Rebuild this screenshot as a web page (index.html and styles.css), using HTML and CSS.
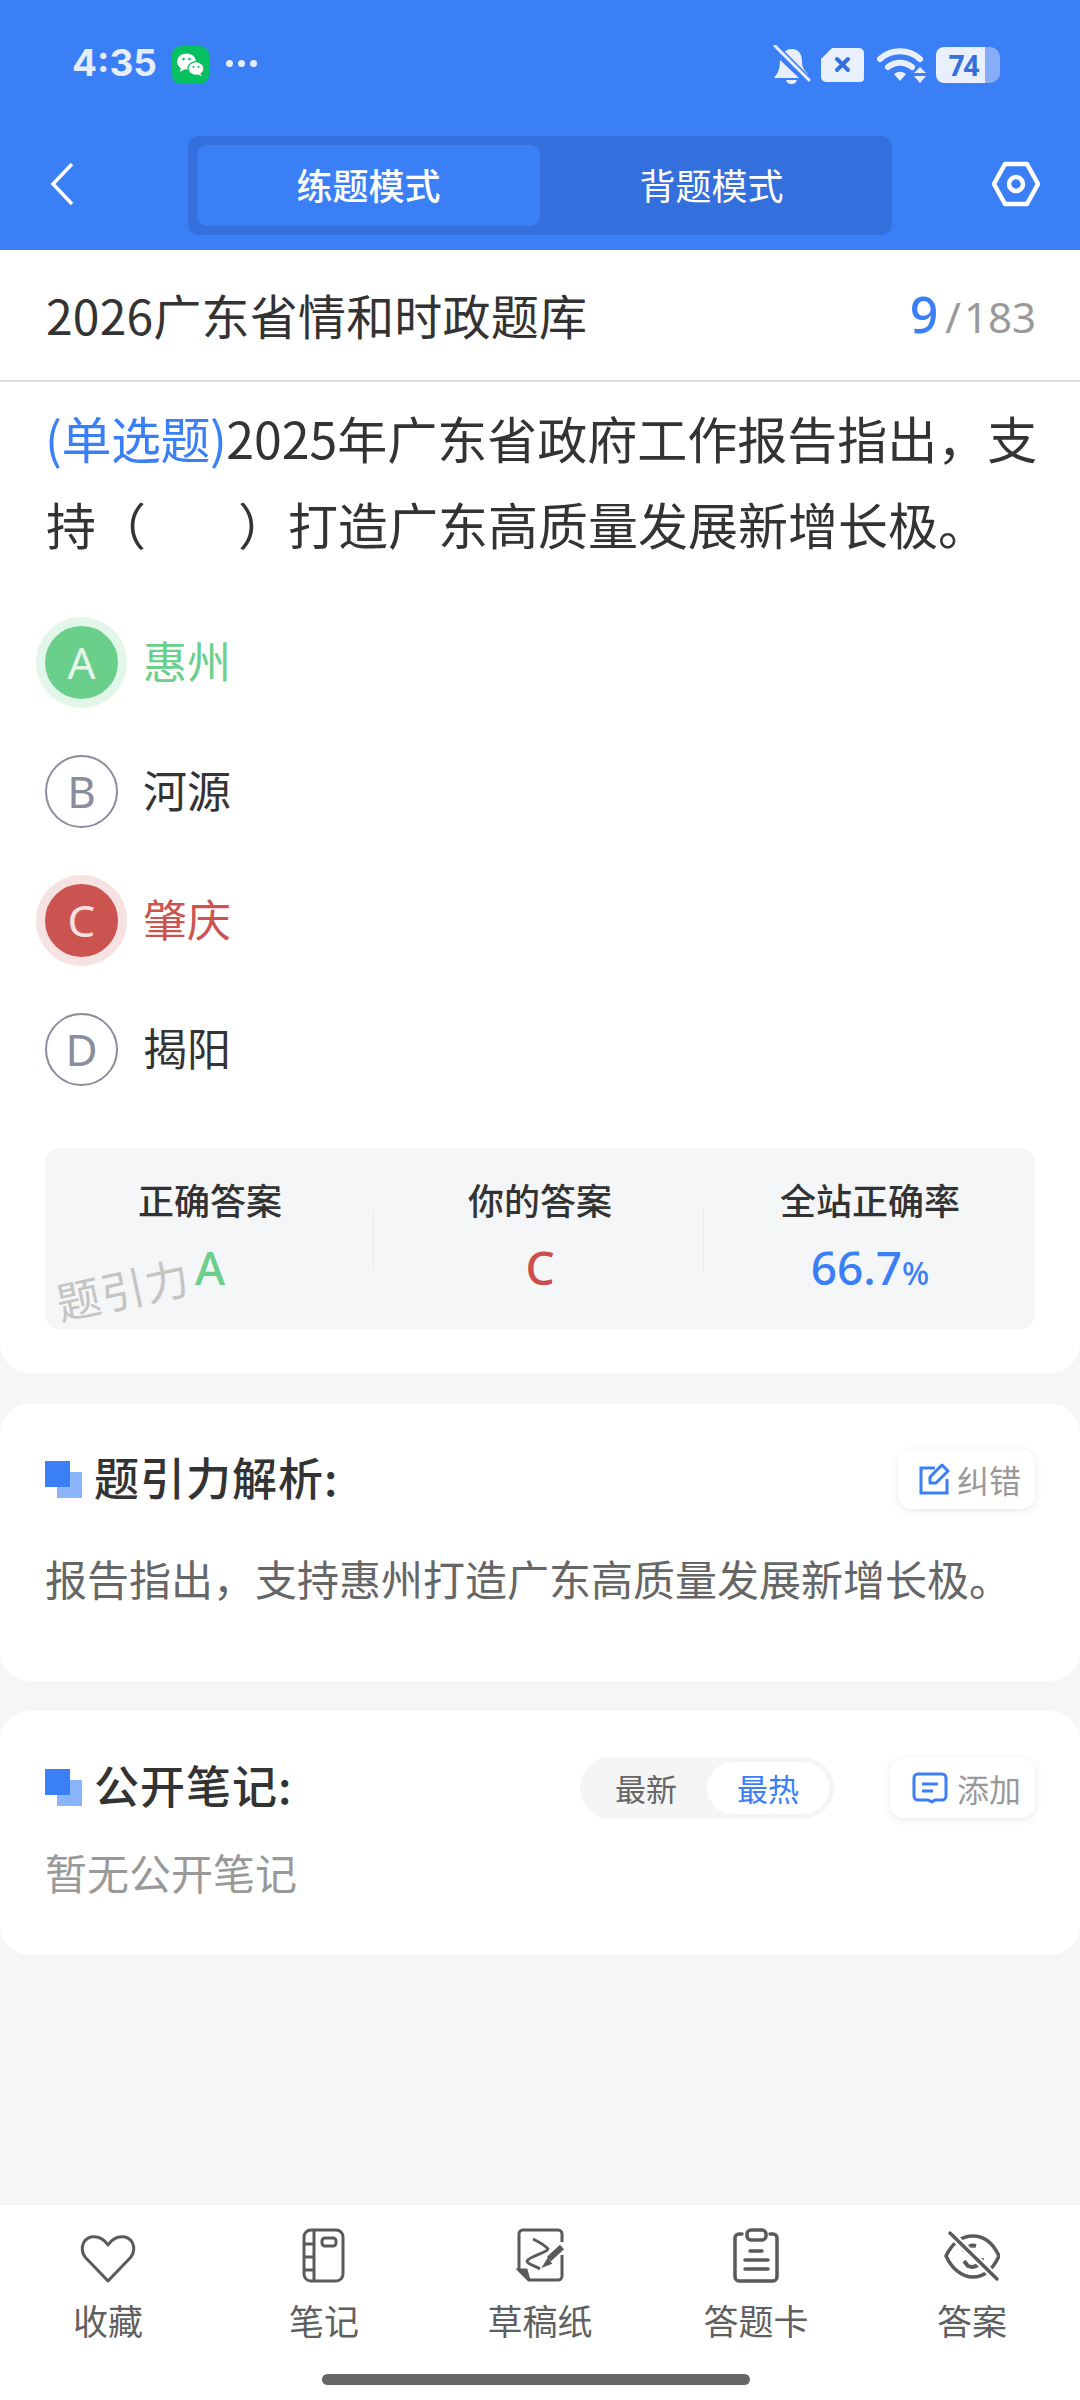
FILE: index.html
```html
<!DOCTYPE html>
<html lang="zh">
<head>
    <meta charset="UTF-8">
    <meta name="viewport" content="width=device-width, initial-scale=1.0">
    <title>题引力</title>
    <link rel="stylesheet" href="styles.css">
</head>
<body>

<div class="page">
    <!-- Blue header -->
    <header class="header">
        <div class="status-bar">
            <div class="status-left">
                <span class="time">4:35</span>
                <svg class="wechat" width="37" height="38" viewBox="0 0 37 38">
                    <rect width="37" height="38" rx="9" fill="#07c160"/>
                    <ellipse cx="14.5" cy="15.5" rx="9.5" ry="8" fill="#fff"/>
                    <path d="M9 21l-1 5 5-3z" fill="#fff"/>
                    <ellipse cx="24" cy="22.5" rx="8" ry="6.8" fill="#fff" stroke="#07c160" stroke-width="1.2"/>
                    <path d="M28 27l2 3-5-2z" fill="#fff"/>
                    <circle cx="11.5" cy="13" r="1.3" fill="#07c160"/>
                    <circle cx="17.5" cy="13" r="1.3" fill="#07c160"/>
                    <circle cx="21.5" cy="21" r="1.1" fill="#07c160"/>
                    <circle cx="26.5" cy="21" r="1.1" fill="#07c160"/>
                </svg>
                <span class="dots"><i></i><i></i><i></i></span>
            </div>
            <div class="status-right">
                <svg width="38" height="40" viewBox="0 0 38 40" fill="#e9effd">
                    <path d="M10 9a10 10 0 0 1 9-5c7 0 10 6 10 12 0 6 2 9 5 12l2 4zM7 15l19 18H1c2-3 6-6 6-18zM13 35h11c-1 3-3 4-5.500 4s-4.500-1-5.500-4z"/>
                    <path d="M2 1l34 34" stroke="#3b7ff7" stroke-width="6"/>
                    <path d="M2 1l34 34" stroke="#e9effd" stroke-width="3" stroke-linecap="round"/>
                </svg>
                <svg width="43" height="36" viewBox="0 0 43 36">
                    <path d="M11 1h27a5 5 0 0 1 5 5v25a4 4 0 0 1-4 4H5a5 5 0 0 1-5-5V12z" fill="#e9effd"/>
                    <path d="M16 12l11 11M27 12L16 23" stroke="#3470dd" stroke-width="4" stroke-linecap="round"/>
                </svg>
                <svg class="wifi" width="50" height="38" viewBox="0 0 50 38">
                    <path d="M3 13a30 30 0 0 1 40 0M11 21a19 19 0 0 1 24 0" fill="none" stroke="#e9effd" stroke-width="6" stroke-linecap="round"/>
                    <path d="M17 28a10 10 0 0 1 12 0l-6 7z" fill="#e9effd"/>
                    <path d="M43 21l6 6H37zM43 37l6-7H37z" fill="#e9effd"/>
                </svg>
                <div class="battery">
                    <span class="battery-level">74</span>
                    <span class="battery-rest"></span>
                </div>
            </div>
        </div>
        <div class="nav-bar">
            <svg class="back" width="24" height="44" viewBox="0 0 24 44">
                <path d="M22 2L3 22l19 20" fill="none" stroke="#fff" stroke-width="3.500"/>
            </svg>
            <div class="mode-tabs">
                <div class="mode-tab active">练题模式</div>
                <div class="mode-tab">背题模式</div>
            </div>
            <svg class="settings" width="50" height="46" viewBox="0 0 50 46">
                <path d="M14 3h22l11 20-11 20H14L3 23z" fill="none" stroke="#fff" stroke-width="4.500" stroke-linejoin="round"/>
                <circle cx="25" cy="23" r="7" fill="none" stroke="#fff" stroke-width="4.500"/>
            </svg>
        </div>
    </header>

    <!-- Question card -->
    <section class="question-card">
        <div class="title-row">
            <span class="bank-title">2026广东省情和时政题库</span>
            <span class="counter"><b>9</b><em>/</em>183</span>
        </div>
        <p class="question"><span class="q-type">(单选题)</span>2025年广东省政府工作报告指出，支持（<span class="blank"></span>）打造广东高质量发展新增长极。</p>

        <div class="options">
            <div class="option correct"><span class="letter">A</span>惠州</div>
            <div class="option"><span class="letter">B</span>河源</div>
            <div class="option wrong"><span class="letter">C</span>肇庆</div>
            <div class="option"><span class="letter">D</span>揭阳</div>
        </div>

        <div class="result-box">
            <div class="result-col">
                <h3>正确答案</h3>
                <span class="result-value green">A</span>
            </div>
            <div class="result-col">
                <h3>你的答案</h3>
                <span class="result-value red">C</span>
            </div>
            <div class="result-col">
                <h3>全站正确率</h3>
                <span class="result-value blue">66.7<small>%</small></span>
            </div>
            <span class="watermark">题引力</span>
        </div>
    </section>

    <!-- Analysis -->
    <section class="card analysis">
        <div class="card-head">
            <h2 class="card-title"><span class="squares"></span>题引力解析:</h2>
            <div class="small-btn">
                <svg width="32" height="32" viewBox="0 0 32 32" fill="none" stroke="#3b7ff7" stroke-width="3">
                    <path d="M17 5H3v25h26V16"/>
                    <path d="M12 20v-6L24 2l6 6-12 12z" stroke-linejoin="round"/>
                </svg>
                <span>纠错</span>
            </div>
        </div>
        <p class="analysis-text">报告指出，支持惠州打造广东高质量发展新增长极。</p>
    </section>

    <!-- Public notes -->
    <section class="card notes">
        <div class="card-head">
            <h2 class="card-title"><span class="squares"></span>公开笔记:</h2>
            <div class="notes-tools">
                <div class="sort-switch">
                    <span class="sort-item">最新</span>
                    <span class="sort-item active">最热</span>
                </div>
                <div class="small-btn">
                    <svg width="36" height="32" viewBox="0 0 36 32" fill="none" stroke="#3b7ff7" stroke-width="3">
                        <path d="M6 2h24a4 4 0 0 1 4 4v18a4 4 0 0 1-4 4h-7l-3 2-4-2H6a4 4 0 0 1-4-4V6a4 4 0 0 1 4-4z"/>
                        <path d="M10 12h16M10 19h11"/>
                    </svg>
                    <span>添加</span>
                </div>
            </div>
        </div>
        <p class="empty-text">暂无公开笔记</p>
    </section>

    <!-- Bottom toolbar -->
    <footer class="toolbar">
        <div class="tool-items">
            <div class="tool-item">
                <svg width="56" height="56" viewBox="0 0 56 56" fill="none" stroke="#5a5a5a" stroke-width="3">
                    <path d="M28 53L5 29C0 22 2 11 11 9c7-1 13 2 17 8 4-6 10-9 17-8 9 2 11 13 6 20z" stroke-linejoin="round"/>
                </svg>
                <span>收藏</span>
            </div>
            <div class="tool-item">
                <svg width="56" height="56" viewBox="0 0 56 56" fill="none" stroke="#5a5a5a" stroke-width="3">
                    <rect x="8" y="2" width="39" height="51" rx="7"/>
                    <path d="M18 2v51M8 16h10M8 29h10M8 42h10"/>
                    <rect x="26" y="10" width="14" height="8" rx="3"/>
                </svg>
                <span>笔记</span>
            </div>
            <div class="tool-item">
                <svg width="56" height="56" viewBox="0 0 56 56" fill="none" stroke="#5a5a5a" stroke-width="3">
                    <path d="M50 14V6a4 4 0 0 0-4-4H11a4 4 0 0 0-4 4v36l10 10h29a4 4 0 0 0 4-4V27"/>
                    <path d="M7 42h7l3 10z" fill="#5a5a5a"/>
                    <path d="M21 11c6 3 12 6 15 10 0 3-20 8-21 12 0 3 8 5 13 8" stroke-linejoin="round"/>
                    <path d="M50 19L37 31" stroke-width="6"/>
                    <path d="M36 32l-3 5 5-2z" fill="#5a5a5a"/>
                </svg>
                <span>草稿纸</span>
            </div>
            <div class="tool-item">
                <svg width="56" height="56" viewBox="0 0 56 56" fill="none" stroke="#5a5a5a" stroke-width="3.500" stroke-linecap="round">
                    <path d="M14 6H11a4 4 0 0 0-4 4v39a4 4 0 0 0 4 4h34a4 4 0 0 0 4-4V10a4 4 0 0 0-4-4h-3"/>
                    <rect x="19" y="2" width="19" height="10" rx="4"/>
                    <path d="M22 23h12M17 32h23M17 41h23"/>
                </svg>
                <span>答题卡</span>
            </div>
            <div class="tool-item">
                <svg width="56" height="56" viewBox="0 0 56 56" fill="none" stroke="#5a5a5a" stroke-width="3.500">
                    <path d="M2 28C8 15 18 8 29 8s20 7 26 20c-6 13-15 21-26 21S8 41 2 28z"/>
                    <path d="M20 24a10 10 0 0 1 12-6M38 30a10 10 0 0 1-14 8l-4-5" stroke-width="4"/>
                    <path d="M6 5l47 46" stroke="#fff" stroke-width="8"/>
                    <path d="M6 5l47 46" stroke-linecap="round"/>
                </svg>
                <span>答案</span>
            </div>
        </div>
        <div class="home-bar"></div>
    </footer>
</div>

</body>
</html>
```

FILE: styles.css
```css
/* 基础样式 */
body {
    font-family: "Noto Sans CJK SC", "Noto Sans", sans-serif;
    background-color: #f5f6f8;
    margin: 0;
    color: #333;
}
h2, h3, p {
    margin: 0;
    font-weight: normal;
}
.page {
    width: 1080px;
    height: 2400px;
    display: flex;
    flex-direction: column;
    overflow: hidden;
}

/* 顶部蓝色区域 */
.header {
    background-color: #3b7ff7;
    height: 250px;
    flex-shrink: 0;
}
.status-bar {
    height: 126px;
    padding: 46px 80px 0 72px;
    box-sizing: border-box;
    display: flex;
    justify-content: space-between;
    align-items: flex-start;
}
.status-left {
    display: flex;
    align-items: center;
    height: 38px;
}
.time {
    font-family: Inter, "Noto Sans", sans-serif;
    font-weight: 700;
    font-size: 37px;
    color: #e6edfd;
    width: 100px;
    margin-bottom: 5px;
}
.dots {
    display: flex;
    gap: 5px;
    margin-left: 17px;
    margin-bottom: 3px;
}
.dots i {
    width: 7px;
    height: 7px;
    border-radius: 50%;
    background: #e6edfd;
}
.status-right {
    display: flex;
    align-items: center;
    height: 38px;
    gap: 10px;
}
.wifi {
    margin: 0 -3px 0 3px;
}
.battery {
    display: flex;
    align-items: stretch;
    height: 36px;
    margin-left: 2px;
}
.battery-level {
    width: 49px;
    padding-left: 6px;
    box-sizing: border-box;
    background: #e9effd;
    border-radius: 8px 0 0 8px;
    color: #3470dd;
    font-family: "Noto Sans", sans-serif;
    font-weight: 700;
    font-size: 28px;
    letter-spacing: -1px;
    line-height: 36px;
    text-align: center;
}
.battery-rest {
    width: 15px;
    background: #85adf9;
    border-radius: 0 10px 10px 0;
}

.nav-bar {
    display: flex;
    align-items: center;
    height: 99px;
    margin-top: 10px;
}
.back {
    margin-left: 50px;
    margin-bottom: 3px;
}
.mode-tabs {
    margin-left: 114px;
    width: 704px;
    height: 100%;
    box-sizing: border-box;
    padding: 9px 9px;
    background: #3470dd;
    border-radius: 10px;
    display: flex;
}
.mode-tab {
    flex: 1;
    border-radius: 10px;
    color: #fff;
    font-size: 36px;
    padding-bottom: 4px;
    display: flex;
    align-items: center;
    justify-content: center;
}
.mode-tab.active {
    background: #3b7ff7;
    font-weight: 500;
}
.settings {
    margin-left: 99px;
    margin-bottom: 3px;
}

/* 题目卡片 */
.question-card {
    background: #fff;
    border-radius: 0 0 30px 30px;
    height: 1123px;
    flex-shrink: 0;
}
.title-row {
    height: 130px;
    box-sizing: content-box;
    border-bottom: 2px solid #ddd;
    padding: 0 44px 0 46px;
    display: flex;
    align-items: center;
    justify-content: space-between;
}
.bank-title {
    font-size: 48px;
    letter-spacing: 0.2px;
    color: #333;
    margin-bottom: 3px;
}
.counter {
    font-size: 42px;
    color: #999;
    font-family: "Noto Sans", sans-serif;
    margin-bottom: 3px;
}
.counter b {
    font-size: 50px;
    font-weight: 500;
    color: #3b7ff7;
}
.counter em {
    font-style: normal;
    margin: 0 3px 0 7px;
}
.question {
    font-size: 50px;
    line-height: 86px;
    padding: 12px 40px 0 46px;
    height: 172px;
}
.q-type {
    color: #3b7ff7;
    letter-spacing: -0.5px;
    margin-left: -1px;
}
.blank {
    display: inline-block;
    width: 92px;
}

/* 选项 */
.options {
    margin-top: 29px;
}
.option {
    height: 129px;
    padding-left: 45px;
    display: flex;
    align-items: center;
    gap: 25px;
    font-size: 44px;
    color: #333;
}
.letter {
    width: 73px;
    height: 73px;
    margin-top: 5px;
    box-sizing: border-box;
    border-radius: 50%;
    border: 2px solid #8a8c9f;
    color: #8a8c9f;
    font-family: "Noto Sans", sans-serif;
    font-size: 44px;
    display: flex;
    align-items: center;
    justify-content: center;
}
.option.correct {
    color: #6bcf8c;
}
.option.correct .letter {
    background: #6bcf8c;
    border-color: #6bcf8c;
    color: #e4f7eb;
    box-shadow: 0 0 0 9px #e2f6ea;
}
.option.wrong {
    color: #cc5450;
}
.option.wrong .letter {
    background: #cc5450;
    border-color: #cc5450;
    color: #f6e0df;
    box-shadow: 0 0 0 9px #f6e2e2;
}

/* 答题结果 */
.result-box {
    position: relative;
    margin: 37px 45px 0;
    height: 181px;
    background: #f5f6f8;
    border-radius: 14px;
    display: flex;
}
.result-col {
    flex: 1;
    display: flex;
    flex-direction: column;
    align-items: center;
    padding-top: 28px;
    position: relative;
}
.result-col + .result-col::before {
    content: "";
    position: absolute;
    left: -2px;
    top: 62px;
    height: 60px;
    width: 1px;
    background: #e8eaee;
}
.result-col h3 {
    font-size: 36px;
    line-height: 46px;
    font-weight: 500;
    color: #333;
}
.result-value {
    margin-top: 18px;
    font-family: "Noto Sans", sans-serif;
    font-size: 46px;
    line-height: 54px;
    font-weight: 500;
}
.result-value small {
    font-size: 32px;
}
.green { color: #6bcf8c; }
.red { color: #c9504d; }
.blue { color: #3b7ff7; }
.watermark {
    position: absolute;
    left: 10px;
    top: 112px;
    font-size: 44px;
    line-height: 56px;
    color: #c4c4c4;
    transform: rotate(-12deg);
    letter-spacing: 1px;
}

/* 解析和笔记卡片 */
.card {
    background: #fff;
    border-radius: 30px;
    flex-shrink: 0;
    padding: 0 45px 0 45px;
    box-sizing: border-box;
}
.analysis {
    margin-top: 31px;
    height: 277px;
}
.notes {
    margin-top: 30px;
    height: 244px;
}
.card-head {
    display: flex;
    align-items: center;
    justify-content: space-between;
    height: 60px;
    padding-top: 45px;
}
.notes .card-head {
    height: 63px;
}
.card-title {
    display: flex;
    align-items: center;
    margin-bottom: 6px;
    font-size: 45px;
    font-weight: 500;
    letter-spacing: 1px;
    color: #333;
}
.squares {
    position: relative;
    width: 37px;
    height: 37px;
    margin: 6px 12px 0 0;
    background: linear-gradient(#3b7ff7, #3b7ff7) 0 0 / 25px 26px no-repeat,
                linear-gradient(#8ab5fa, #8ab5fa) 12px 11px / 25px 26px no-repeat;
}
.small-btn {
    display: flex;
    align-items: center;
    gap: 7px;
    height: 60px;
    padding: 0 14px 0 20px;
    background: #fff;
    border-radius: 14px;
    box-shadow: 0 2px 8px rgba(0, 0, 0, 0.09);
    font-size: 32px;
    color: #999;
}
.notes .small-btn {
    gap: 9px;
    padding: 0 14px 0 22px;
}
.analysis-text {
    margin-top: 39px;
    font-size: 42px;
    line-height: 60px;
    color: #666;
}
.notes-tools {
    display: flex;
    align-items: center;
    gap: 56px;
}
.sort-switch {
    display: flex;
    align-items: center;
    width: 254px;
    height: 62px;
    box-sizing: border-box;
    padding: 5px;
    background: #f5f5f5;
    border-radius: 31px;
}
.sort-item {
    width: 122px;
    height: 52px;
    border-radius: 26px;
    font-size: 31px;
    color: #666;
    display: flex;
    align-items: center;
    justify-content: center;
}
.sort-item.active {
    background: #fff;
    color: #3b7ff7;
}
.empty-text {
    margin-top: 23px;
    font-size: 42px;
    line-height: 60px;
    color: #999;
}

/* 底部工具栏 */
.toolbar {
    margin-top: auto;
    height: 196px;
    flex-shrink: 0;
    background: #fff;
    border-top: 1px solid #f0f1f4;
    box-sizing: border-box;
    display: flex;
    flex-direction: column;
    align-items: center;
}
.tool-items {
    width: 100%;
    display: flex;
    padding-top: 23px;
}
.tool-item {
    flex: 1;
    display: flex;
    flex-direction: column;
    align-items: center;
    gap: 14px;
    font-size: 35px;
    line-height: 44px;
    color: #5f5f5f;
}
.home-bar {
    width: 428px;
    height: 11px;
    margin-top: 32px;
    margin-right: 8px;
    border-radius: 6px;
    background: #666;
}
```
